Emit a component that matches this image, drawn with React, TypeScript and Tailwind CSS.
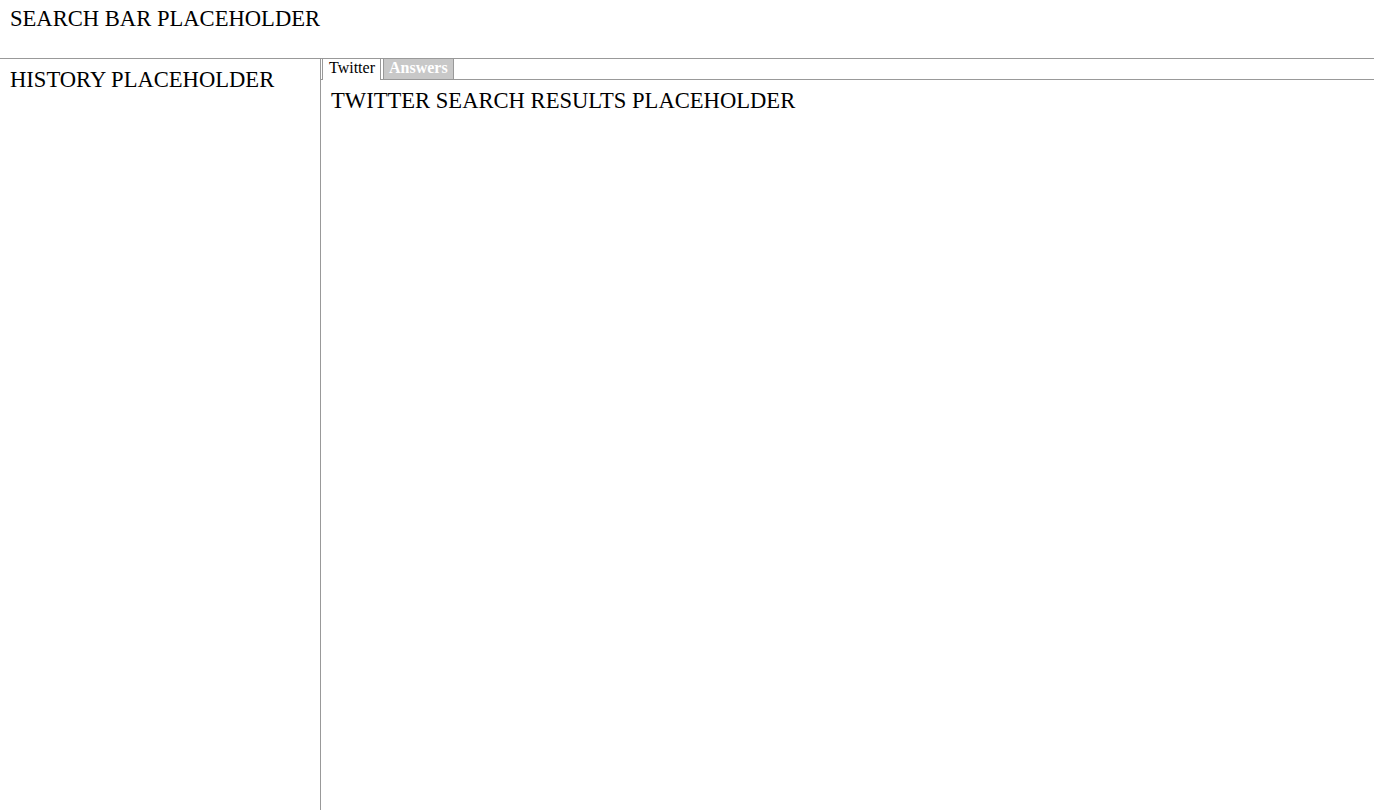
export default function App() {
  return (
    <div className="flex h-[810px] flex-col bg-white font-['Liberation_Serif',serif] text-black">
      <div className="h-[59px] shrink-0 border-b border-[#999] px-[10px] pt-[6px] text-[22.6px] leading-[26px]">
        SEARCH BAR PLACEHOLDER
      </div>
      <div className="flex min-h-0 flex-1">
        <div className="w-[321px] shrink-0 border-r border-[#999] px-[10px] pt-[8px] text-[22.6px] leading-[26px]">
          HISTORY PLACEHOLDER
        </div>
        <div className="flex min-w-0 flex-1 flex-col">
          <div className="flex h-[21px] items-end gap-[2px] border-b border-[#999] pl-[1px] text-[16px] leading-[18px]">
            <div className="-mb-px h-[21px] border-x border-[#999] bg-white pl-[6px] pr-[5px]">
              Twitter
            </div>
            <div className="h-[20px] border-x border-[#999] bg-[#c8c8c8] px-[5px] font-bold text-white">
              Answers
            </div>
          </div>
          <div className="px-[10px] pt-[8px] text-[22.6px] leading-[26px]">
            TWITTER SEARCH RESULTS PLACEHOLDER
          </div>
        </div>
      </div>
    </div>
  );
}
